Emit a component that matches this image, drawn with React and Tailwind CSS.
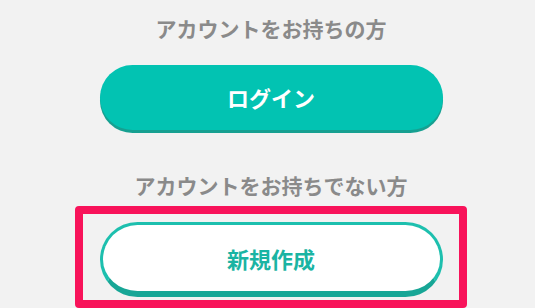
export default function App() {
  return (
    <div
      className="h-[308px] w-[535px] overflow-hidden bg-[#f2f2f2]"
      style={{ fontFamily: '"Noto Sans CJK JP", "Noto Sans", sans-serif' }}
    >
      <div className="ml-[75px] flex w-[392px] flex-col items-center">
        {/* existing account */}
        <p className="mt-[14px] text-[21px] font-bold leading-[28px] text-[#8a8a8a]">
          アカウントをお持ちの方
        </p>
        <button className="mt-[23px] flex h-[65px] w-[343px] items-center justify-center rounded-full bg-[#02c3b2] text-[22px] font-bold text-white shadow-[0_3px_0_#16a091]">
          ログイン
        </button>

        {/* new account */}
        <p className="mt-[41px] text-[21px] font-bold leading-[28px] text-[#8a8a8a]">
          アカウントをお持ちでない方
        </p>
        <div className="mt-[7px] flex h-[102px] w-[392px] justify-center rounded-[4px] border-[8px] border-[#f8135a] pt-[8px]">
          <button className="flex h-[75px] w-[343px] items-center justify-center rounded-full border-[3px] border-b-[6px] border-[#1dbfae] border-b-[#17a696] bg-white text-[22px] font-bold text-[#1ab4a3]">
            新規作成
          </button>
        </div>
      </div>
    </div>
  );
}
